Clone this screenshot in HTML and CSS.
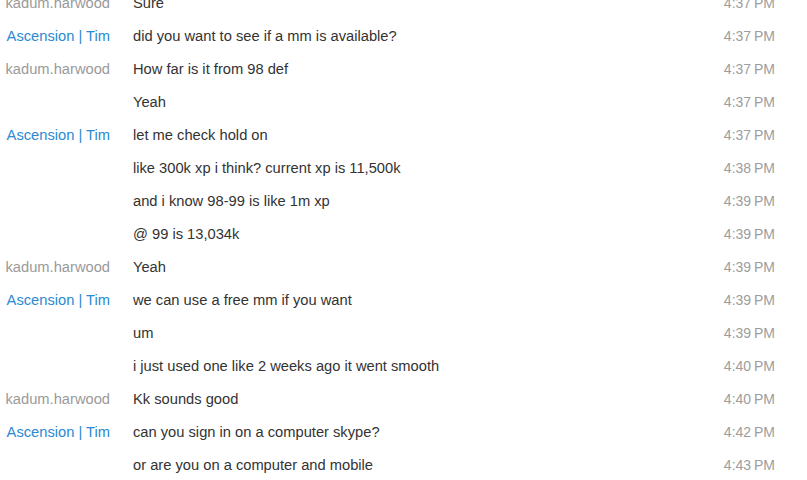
FILE: index.html
```html
<!DOCTYPE html>
<html>
<head>
<meta charset="utf-8">
<link rel="stylesheet" href="styles.css">
</head>
<body>
<div class="chat">
  <div class="row"><span class="name other">kadum.harwood</span><span class="msg">Sure</span><span class="time">4:37 PM</span></div>
  <div class="row"><span class="name me">Ascension | Tim</span><span class="msg">did you want to see if a mm is available?</span><span class="time">4:37 PM</span></div>
  <div class="row"><span class="name other">kadum.harwood</span><span class="msg">How far is it from 98 def</span><span class="time">4:37 PM</span></div>
  <div class="row"><span class="name"></span><span class="msg">Yeah</span><span class="time">4:37 PM</span></div>
  <div class="row"><span class="name me">Ascension | Tim</span><span class="msg">let me check hold on</span><span class="time">4:37 PM</span></div>
  <div class="row"><span class="name"></span><span class="msg">like 300k xp i think? current xp is 11,500k</span><span class="time">4:38 PM</span></div>
  <div class="row"><span class="name"></span><span class="msg">and i know 98-99 is like 1m xp</span><span class="time">4:39 PM</span></div>
  <div class="row"><span class="name"></span><span class="msg">@ 99 is 13,034k</span><span class="time">4:39 PM</span></div>
  <div class="row"><span class="name other">kadum.harwood</span><span class="msg">Yeah</span><span class="time">4:39 PM</span></div>
  <div class="row"><span class="name me">Ascension | Tim</span><span class="msg">we can use a free mm if you want</span><span class="time">4:39 PM</span></div>
  <div class="row"><span class="name"></span><span class="msg">um</span><span class="time">4:39 PM</span></div>
  <div class="row"><span class="name"></span><span class="msg">i just used one like 2 weeks ago it went smooth</span><span class="time">4:40 PM</span></div>
  <div class="row"><span class="name other">kadum.harwood</span><span class="msg">Kk sounds good</span><span class="time">4:40 PM</span></div>
  <div class="row"><span class="name me">Ascension | Tim</span><span class="msg">can you sign in on a computer skype?</span><span class="time">4:42 PM</span></div>
  <div class="row"><span class="name"></span><span class="msg">or are you on a computer and mobile</span><span class="time">4:43 PM</span></div>
</div>
</body>
</html>
```
FILE: styles.css
```css
html, body {
  margin: 0;
  padding: 0;
  background: #ffffff;
  overflow: hidden;
}
body {
  font-family: "Liberation Sans", Arial, sans-serif;
  font-size: 14.7px;
}
.chat {
  margin-top: -13px;
  display: flex;
  flex-direction: column;
}
.row {
  display: grid;
  grid-template-columns: 110px 1fr auto;
  column-gap: 23px;
  height: 33px;
  line-height: 33px;
  padding-right: 32px;
  white-space: nowrap;
}
.name {
  text-align: right;
}
.other {
  color: #9a9a9a;
}
.me {
  color: #2b8ad3;
}
.msg {
  color: #333333;
}
.time {
  color: #9d9d9d;
  font-size: 14px;
  word-spacing: -1px;
}
```
